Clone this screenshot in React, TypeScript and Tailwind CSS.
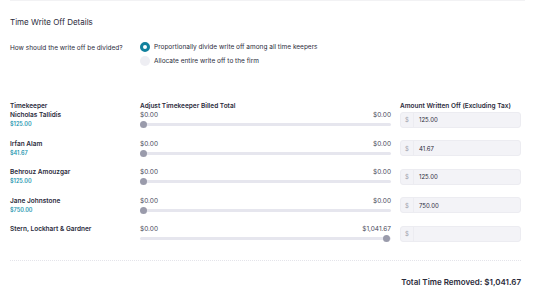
import React from 'react';

type Row = {
  name: string;
  amount?: string;
  min: string;
  max: string;
  value: string;
  thumbEnd?: boolean;
};

const rows: Row[] = [
  { name: 'Nicholas Tallidis', amount: '$125.00', min: '$0.00', max: '$0.00', value: '125.00' },
  { name: 'Irfan Alam', amount: '$41.67', min: '$0.00', max: '$0.00', value: '41.67' },
  { name: 'Behrouz Amouzgar', amount: '$125.00', min: '$0.00', max: '$0.00', value: '125.00' },
  { name: 'Jane Johnstone', amount: '$750.00', min: '$0.00', max: '$0.00', value: '750.00' },
  { name: 'Stern, Lockhart & Gardner', min: '$0.00', max: '$1,041.67', value: '', thumbEnd: true },
];

function Slider({ end }: { end?: boolean }) {
  return (
    <div className="relative h-[9px] flex items-center">
      <div className="h-[3px] w-full rounded-full bg-[#e6e6ee]" />
      <div
        className={`absolute top-[1px] h-[7px] w-[7px] rounded-full bg-[#9a9bab] ${end ? 'right-[1px]' : 'left-0'}`}
      />
    </div>
  );
}

export default function App() {
  return (
    <div className="w-[535px] h-[297px] bg-white text-[#2b2b3b] overflow-hidden" style={{ fontFamily: 'Inter, "Noto Sans", sans-serif' }}>
      <div className="mx-[10px] border-t border-[#f2f2f4]" />
      <div className="w-[511px] ml-[10px]">
        <h1 className="mt-[15px] text-[8px] leading-[12px] text-[#2b2b3b]">Time Write Off Details</h1>

        <div className="mt-[14px] flex">
          <div className="w-[130px] pt-[2px] text-[6.5px] leading-[9px]">How should the write off be divided?</div>
          <div className="flex flex-col gap-[4px]">
            <label className="flex items-center gap-[4px] text-[6.5px] leading-[10px]">
              <span className="h-[10px] w-[10px] rounded-full border-[3px] border-[#11819d] bg-white" />
              Proportionally divide write off among all time keepers
            </label>
            <label className="flex items-center gap-[4px] text-[6.5px] leading-[10px]">
              <span className="h-[10px] w-[10px] rounded-full bg-[#eeeef3]" />
              Allocate entire write off to the firm
            </label>
          </div>
        </div>

        <div className="mt-[36px] grid grid-cols-[121px_251px_121px] gap-x-[9px] text-[6.5px] leading-[9px] font-semibold">
          <div>Timekeeper</div>
          <div>Adjust Timekeeper Billed Total</div>
          <div>Amount Written Off (Excluding Tax)</div>
        </div>

        {rows.map((r) => (
          <div key={r.name} className="grid h-[28.5px] grid-cols-[121px_251px_121px] gap-x-[9px] items-start">
            <div className="whitespace-nowrap">
              <div className="text-[6.5px] leading-[9px] font-semibold">{r.name}</div>
              {r.amount && <div className="text-[5.5px] leading-[9px] font-semibold text-[#2596b0]">{r.amount}</div>}
            </div>
            <div>
              <div className="flex justify-between text-[6.5px] leading-[9px] text-[#4a4a5a]">
                <span>{r.min}</span>
                <span>{r.max}</span>
              </div>
              <Slider end={r.thumbEnd} />
            </div>
            <div className="mt-[0.5px] flex h-[16px] rounded-[3px] border border-[#ececf1] bg-[#f3f3f7]">
              <div className="flex w-[13px] items-center justify-center border-r border-[#ececf1] text-[6px] text-[#a0a0ae]">$</div>
              <div className="flex items-center pl-[5px] text-[6px] text-[#2b2b3b]">{r.value}</div>
            </div>
          </div>
        ))}

        <div className="mt-[6px] border-t border-dotted border-[#e4e4ea]" />

        <div className="mt-[16px] text-right text-[8px] leading-[11px] font-semibold">Total Time Removed: $1,041.67</div>
      </div>
    </div>
  );
}
